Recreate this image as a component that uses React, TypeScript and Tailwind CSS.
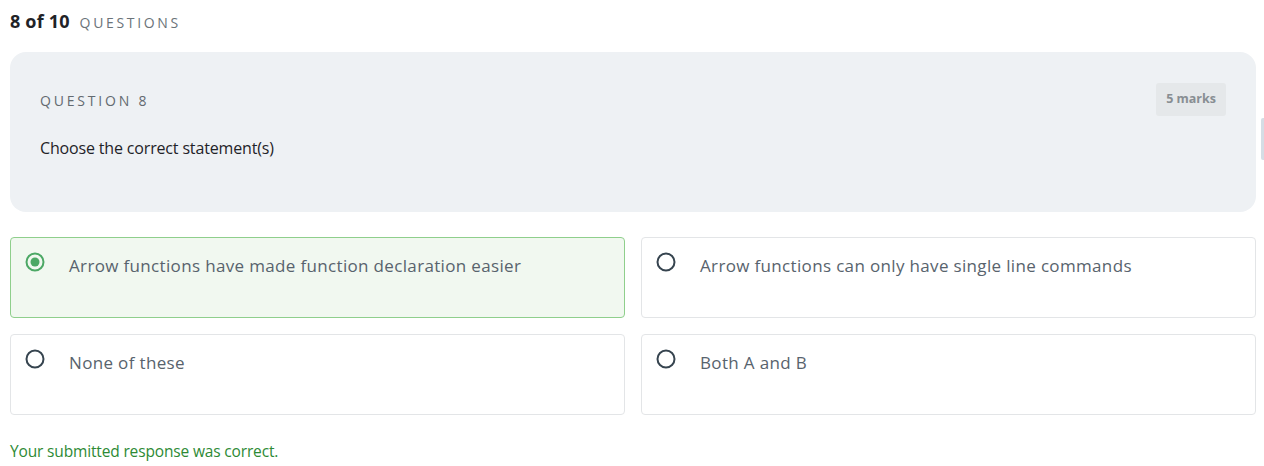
import React from 'react'

const options = [
  { id: 'a', text: 'Arrow functions have made function declaration easier', selected: true },
  { id: 'b', text: 'Arrow functions can only have single line commands', selected: false },
  { id: 'c', text: 'None of these', selected: false },
  { id: 'd', text: 'Both A and B', selected: false },
]

function Radio({ checked }: { checked: boolean }) {
  if (checked) {
    return (
      <svg width="20" height="20" viewBox="0 0 20 20" className="shrink-0">
        <circle cx="10" cy="10" r="8.5" fill="none" stroke="#4ca865" strokeWidth="2" />
        <circle cx="10" cy="10" r="4.5" fill="#4ca865" />
      </svg>
    )
  }
  return (
    <svg width="20" height="20" viewBox="0 0 20 20" className="shrink-0">
      <circle cx="10" cy="10" r="8.5" fill="none" stroke="#36444f" strokeWidth="2" />
    </svg>
  )
}

export default function App() {
  return (
    <div className="relative min-h-[466px] bg-white pl-[10px] pr-[8px] pt-[9px] font-['Open_Sans',sans-serif]">
      {/* header */}
      <div className="flex items-baseline gap-[10px] leading-[24px]">
        <span className="text-[18px] font-bold tracking-[0.01em] text-[#1f2328]">8 of 10</span>
        <span className="text-[14px] tracking-[0.19em] text-[#6b7379]">QUESTIONS</span>
      </div>

      {/* question card */}
      <div className="mt-[17px] h-[160px] rounded-[16px] bg-[#eef1f4] px-[30px] pt-[31px]">
        <div className="flex items-start justify-between">
          <span className="mt-[7px] text-[14px] tracking-[0.2em] text-[#636a70]">QUESTION 8</span>
          <span className="flex h-[33px] items-center rounded-[3px] bg-[#e5e8ea] px-[10px] text-[12.5px] font-bold text-[#888e93]">
            5 marks
          </span>
        </div>
        <p className="mt-[20px] text-[16px] tracking-[-0.01em] text-[#1f2328]">Choose the correct statement(s)</p>
      </div>

      {/* options */}
      <div className="mt-[25px] grid grid-cols-2 gap-[16px]">
        {options.map((o) => (
          <div
            key={o.id}
            className={
              o.selected
                ? 'flex h-[81px] items-start gap-[24px] rounded-[4px] border border-[#8fcf8c] bg-[#f1f8f0] px-[14px] pt-[14px]'
                : 'flex h-[81px] items-start gap-[24px] rounded-[4px] border border-[#e3e5e7] bg-white px-[14px] pt-[14px]'
            }
          >
            <Radio checked={o.selected} />
            <span className="mt-[2px] text-[17px] leading-[24px] tracking-[0.02em] text-[#58636d]">{o.text}</span>
          </div>
        ))}
      </div>

      <p className="mt-[25px] text-[15.5px] tracking-[-0.01em] text-[#2d8a35]">Your submitted response was correct.</p>

      {/* scrollbar stub on right edge */}
      <div className="absolute right-0 top-[118px] h-[42px] w-[3px] rounded-l-[2px] bg-[#d5dde5]" />
    </div>
  )
}
